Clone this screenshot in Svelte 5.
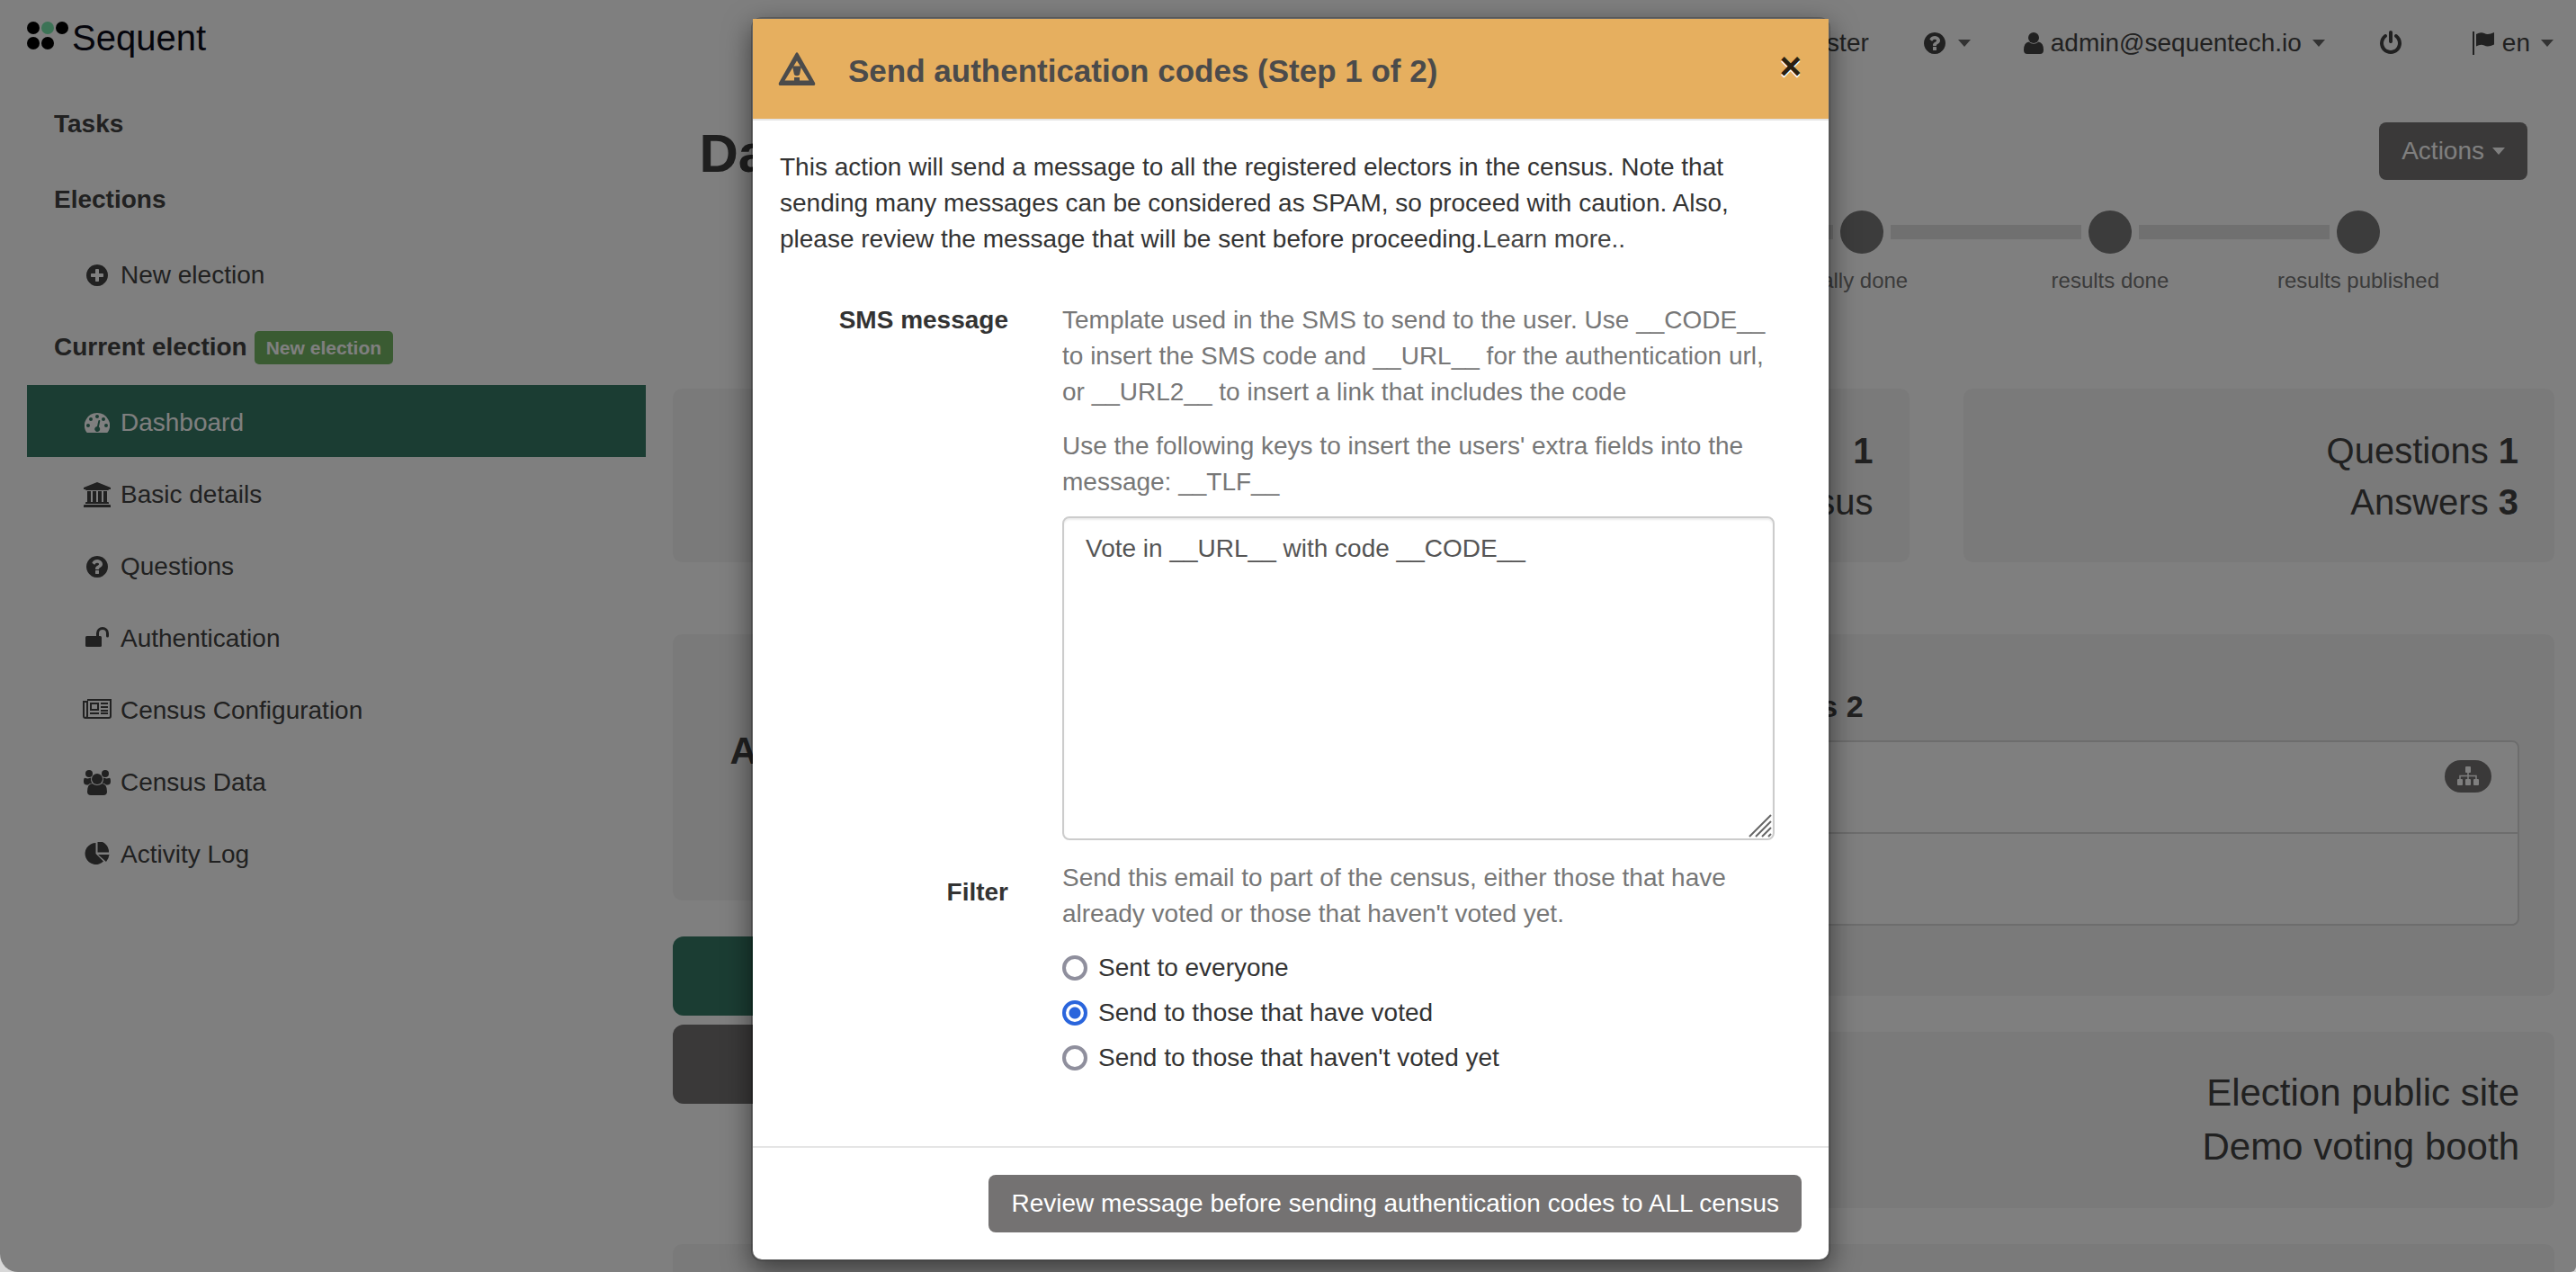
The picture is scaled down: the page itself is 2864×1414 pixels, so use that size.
<script lang="ts">
  let message = $state('Vote in __URL__ with code __CODE__');
  let filter = $state('voted');

  const menu = [
    { icon: 'gauge', label: 'Dashboard', active: true },
    { icon: 'bank', label: 'Basic details' },
    { icon: 'question', label: 'Questions' },
    { icon: 'unlock', label: 'Authentication' },
    { icon: 'news', label: 'Census Configuration' },
    { icon: 'group', label: 'Census Data' },
    { icon: 'pie', label: 'Activity Log' },
  ];

  const steps = ['created', 'started', 'notifications', 'stopped', 'tally done', 'results done', 'results published'];

  const filters = [
    { value: 'all', label: 'Sent to everyone' },
    { value: 'voted', label: 'Send to those that have voted' },
    { value: 'not-voted', label: "Send to those that haven't voted yet" },
  ];
</script>

{#snippet icon(name: string)}
  {#if name === 'gauge'}
    <svg class="icon" width="28" height="28" viewBox="0 0 28 28" aria-hidden="true">
      <path fill="currentColor" fill-rule="evenodd" d="M14 3A14 14 0 0 0 2 24.3Q2.5 25 3.2 25H24.8Q25.5 25 26 24.3A14 14 0 0 0 14 3zM4 15a2 2 0 1 0 0 4 2 2 0 0 0 0-4zM7 8a2 2 0 1 0 0 4 2 2 0 0 0 0-4zM14 5a2 2 0 1 0 0 4 2 2 0 0 0 0-4zM21 8a2 2 0 1 0 0 4 2 2 0 0 0 0-4zM24 15a2 2 0 1 0 0 4 2 2 0 0 0 0-4zM15.4 11.6L14 18A3 3 0 1 0 15.9 18.5L17.3 12.1A1 1 0 0 0 15.4 11.6z" />
    </svg>
  {:else if name === 'bank'}
    <svg class="icon" width="30" height="28" viewBox="0 0 30 28" aria-hidden="true">
      <path fill="currentColor" d="M15 0L30 6V8H28Q28 9 27 9H3Q2 9 2 8H0V6zM4 10H8V22H10V10H14V22H16V10H20V22H22V10H26V22H27Q28 22 28 23V24H2V23Q2 22 3 22H4zM1 25H29Q30 25 30 26V28H0V26Q0 25 1 25z" />
    </svg>
  {:else if name === 'unlock'}
    <svg class="icon" width="26" height="28" viewBox="0 0 26 28" aria-hidden="true">
      <rect x="0" y="11" width="18" height="12" rx="1.5" fill="currentColor" />
      <path d="M13.5 12V8a5.5 5.5 0 0 1 11 0V11" fill="none" stroke="currentColor" stroke-width="3" stroke-linecap="round" />
    </svg>
  {:else if name === 'news'}
    <svg class="icon" width="32" height="28" viewBox="0 2 32 28" aria-hidden="true">
      <path d="M5 4H31V22Q31 24 29 24H3Q1 24 1 22V6H5V22Q5 24 3 24M8 19H18M20 19H28M20 16H28M20 12H28M20 8H28" fill="none" stroke="currentColor" stroke-width="2" />
      <rect x="9" y="8" width="8" height="7" fill="none" stroke="currentColor" stroke-width="2" />
    </svg>
  {:else if name === 'group'}
    <svg class="icon" width="30" height="28" viewBox="0 0 30 28" aria-hidden="true">
      <g fill="currentColor">
        <circle cx="6" cy="4" r="4" />
        <circle cx="24" cy="4" r="4" />
        <circle cx="15" cy="10" r="6" />
        <path d="M2 9Q5 10 8.2 8.6Q7.500 12 9.500 14.500Q6.500 14.500 5 16.500H3Q0 16 0 13Q0 8 2 9zM28 9Q25 10 21.800 8.600Q22.500 12 20.500 14.500Q23.500 14.500 25 16.500H27Q30 16 30 13Q30 8 28 9z" />
        <path d="M9.500 15Q15 19 20.500 15Q26 15.500 26 24Q26 28 22 28H8Q4 28 4 24Q4 15.500 9.500 15z" />
      </g>
    </svg>
  {:else if name === 'pie'}
    <svg class="icon" width="28" height="28" viewBox="0 2 28 28" aria-hidden="true">
      <path fill="currentColor" d="M12.500 3V15L21 23.500A12 12 0 1 1 12.500 3zM15 16H27.500Q27 20.500 24 24zM14.500 1A12 12 0 0 1 27 13.500H14.500z" />
    </svg>
  {:else if name === 'plus'}
    <svg class="icon" width="28" height="28" viewBox="0 0 1792 1792" aria-hidden="true">
      <path fill="currentColor" d="M1344 960v-128q0-26-19-45t-45-19h-256v-256q0-26-19-45t-45-19h-128q-26 0-45 19t-19 45v256h-256q-26 0-45 19t-19 45v128q0 26 19 45t45 19h256v256q0 26 19 45t45 19h128q26 0 45-19t19-45v-256h256q26 0 45-19t19-45zm320-64q0 209-103 385.500t-279.500 279.500-385.500 103-385.500-103-279.500-279.500-103-385.500 103-385.500 279.500-279.500 385.500-103 385.500 103 279.500 279.500 103 385.500z" />
    </svg>
  {:else if name === 'question'}
    <svg class="icon" width="28" height="28" viewBox="0 0 1792 1792" aria-hidden="true">
      <path fill="currentColor" d="M1024 1376v-192q0-14-9-23t-23-9h-192q-14 0-23 9t-9 23v192q0 14 9 23t23 9h192q14 0 23-9t9-23zm256-672q0-88-55.500-163t-138.500-116-170-41q-243 0-371 213-15 24 8 42l132 100q7 6 19 6 16 0 25-12 53-68 86-92 34-24 86-24 48 0 85.500 26t37.500 59q0 38-20 61t-68 45q-63 28-115.500 86.500t-52.500 125.500v36q0 14 9 23t23 9h192q14 0 23-9t9-23q0-19 21.500-49.500t54.500-49.500q32-18 49-28.500t46-35 44.500-48 28-60.500 12.500-81zm384 192q0 209-103 385.500t-279.500 279.500-385.500 103-385.500-103-279.500-279.500-103-385.500 103-385.500 279.500-279.500 385.500-103 385.500 103 279.500 279.500 103 385.500z" />
    </svg>
  {:else if name === 'user'}
    <svg class="icon" width="22" height="28" viewBox="0 0 22 28" aria-hidden="true">
      <circle cx="11" cy="8" r="6" fill="currentColor" />
      <path fill="currentColor" d="M5.500 12.500Q11 17 16.500 12.500Q22 13.500 22 21.500Q22 26 18 26H4Q0 26 0 21.500Q0 13.500 5.500 12.500z" />
    </svg>
  {:else if name === 'power'}
    <svg class="icon" width="28" height="28" viewBox="0 0 1792 1792" aria-hidden="true">
      <path fill="currentColor" d="M1664 896q0 156-61 298t-164 245-245 164-298 61-298-61-245-164-164-245-61-298q0-182 80.500-343t226.500-270q43-32 95.500-25t83.500 50q32 42 24.500 94.500t-49.500 84.500q-98 74-151.500 181t-53.500 228q0 104 40.500 198.500t109.500 163.500 163.500 109.500 198.500 40.500 198.500-40.500 163.500-109.500 109.500-163.500 40.500-198.500q0-121-53.500-228t-151.500-181q-42-32-49.500-84.500t24.500-94.500q31-43 84-50t95 25q146 109 226.500 270t80.500 343zm-640-768v640q0 52-38 90t-90 38-90-38-38-90v-640q0-52 38-90t90-38 90 38 38 90z" />
    </svg>
  {:else if name === 'flag'}
    <svg class="icon" width="26" height="28" viewBox="0 0 26 28" aria-hidden="true">
      <path fill="currentColor" d="M1 1H3V27H1zM5 4Q10 1 14 3Q18 5.500 25 2V15.500Q18 19 14 16.500Q10 14.500 5 17.500z" />
    </svg>
  {/if}
{/snippet}

<div class="window">
  <header class="navbar">
    <a class="brand" href="#home">
      <svg width="46" height="32" viewBox="0 0 46 32" aria-hidden="true">
        <circle cx="7" cy="7" r="7" />
        <circle class="mint" cx="23" cy="7" r="7" />
        <circle cx="39" cy="7" r="7" />
        <circle cx="7" cy="24" r="7" />
        <circle cx="23" cy="24" r="7" />
      </svg>
      <span>Sequent</span>
    </a>
    <nav class="top-links">
      <a href="#register">Register</a>
      <a href="#help" aria-label="Help">{@render icon('question')}<i class="caret"></i></a>
      <a href="#account">{@render icon('user')}<span>admin@sequentech.io</span><i class="caret"></i></a>
      <a class="logout" href="#logout" aria-label="Log out">{@render icon('power')}</a>
      <a href="#language">{@render icon('flag')}<span>en</span><i class="caret"></i></a>
    </nav>
  </header>

  <div class="columns">
    <nav class="sidebar">
      <a class="section" href="#tasks">Tasks</a>
      <a class="section" href="#elections">Elections</a>
      <a class="item" href="#new"><span class="slot">{@render icon('plus')}</span>New election</a>
      <div class="section">Current election <span class="tag">New election</span></div>
      {#each menu as entry}
        <a class="item" class:active={entry.active} href="#{entry.icon}">
          <span class="slot">{@render icon(entry.icon)}</span>{entry.label}
        </a>
      {/each}
    </nav>

    <main>
      <div class="title-row">
        <h1>Dashboard</h1>
        <button class="btn" type="button">Actions<i class="caret"></i></button>
      </div>

      <ol class="steps">
        {#each steps as step}
          <li><span class="dot"></span><span class="step-label">{step}</span></li>
        {/each}
      </ol>

      <div class="thirds">
        <section class="card figures"></section>
        <section class="card figures">
          <p><b>1</b></p>
          <p>Census</p>
        </section>
        <section class="card figures">
          <p>Questions <b>1</b></p>
          <p>Answers <b>3</b></p>
        </section>
      </div>

      <div class="halves">
        <div class="stack">
          <section class="card auth"><h2>Authentication</h2></section>
          <div class="buttons">
            <button class="big go" type="button" aria-label="Continue"></button>
            <button class="big" type="button" aria-label="More actions"></button>
          </div>
        </div>
        <div class="stack">
          <section class="card authorities">
            <h3>Authorities 2</h3>
            <ul>
              <li>
                <span class="pill">
                  <svg width="26" height="22" viewBox="0 0 26 22" aria-hidden="true">
                    <path d="M13 5V15M4 15V10.500H22V15" fill="none" stroke="currentColor" stroke-width="1.500" />
                    <g fill="currentColor">
                      <rect x="10" y="0" width="6" height="7" rx="1" />
                      <rect x="1" y="14" width="6" height="7" rx="1" />
                      <rect x="10" y="14" width="6" height="7" rx="1" />
                      <rect x="19" y="14" width="6" height="7" rx="1" />
                    </g>
                  </svg>
                </span>
              </li>
              <li></li>
            </ul>
          </section>
          <section class="card links">
            <a href="#site">Election public site</a>
            <a href="#booth">Demo voting booth</a>
          </section>
        </div>
        <section class="card wide"></section>
      </div>
    </main>
  </div>

  <div class="backdrop">
    <div class="modal" role="dialog" aria-labelledby="modal-title">
      <div class="modal-header">
        <svg width="42" height="38" viewBox="0 0 42 38" aria-hidden="true">
          <path fill="currentColor" fill-rule="evenodd" d="M19.500 1.500Q21 -1 22.500 1.500L41 34Q42 37 39.500 37H2.500Q0 37 1 34zM21 9.500L7.500 31.500H34.500z" />
          <path fill="currentColor" d="M16 15.500H26L24 25Q21 27.500 18 25zM18 28H24V33H18z" />
        </svg>
        <h4 id="modal-title">Send authentication codes (Step 1 of 2)</h4>
        <button class="close" type="button" aria-label="Close">×</button>
      </div>

      <form class="modal-body">
        <p class="intro">
          This action will send a message to all the registered electors in the census. Note that
          sending many messages can be considered as SPAM, so proceed with caution. Also, please
          review the message that will be sent before proceeding.<a href="#learn">Learn more..</a>
        </p>
        <div class="field">
          <label class="name" for="sms">SMS message</label>
          <div>
            <p class="hint">
              Template used in the SMS to send to the user. Use __CODE__ to insert the SMS code and
              __URL__ for the authentication url, or __URL2__ to insert a link that includes the code
            </p>
            <p class="hint keys">
              Use the following keys to insert the users' extra fields into the message: __TLF__
            </p>
            <div class="area">
              <textarea id="sms" bind:value={message}></textarea>
              <svg class="grip" width="26" height="26" viewBox="0 0 26 26" aria-hidden="true">
                <path d="M1 25L25 1M8 25L25 8M15 25L25 15M22 25L25 22" fill="none" stroke="#666" stroke-width="2" />
              </svg>
            </div>
          </div>
        </div>
        <div class="field" role="radiogroup" aria-labelledby="filter-name">
          <span class="name filter-name" id="filter-name">Filter</span>
          <div>
            <p class="hint">
              Send this email to part of the census, either those that have already voted or those
              that haven't voted yet.
            </p>
            {#each filters as option}
              <label class="radio">
                <input type="radio" name="filter" value={option.value} bind:group={filter} />
                {option.label}
              </label>
            {/each}
          </div>
        </div>
      </form>

      <div class="modal-footer">
        <button class="btn" type="button">Review message before sending authentication codes to ALL census</button>
      </div>
    </div>
  </div>
</div>

<style>
  :global(body) {
    background: #d8d8d8;
  }

  .window {
    position: relative;
    height: 100vh;
    overflow: hidden;
    box-sizing: border-box;
    background: #fff;
    border-radius: 0 0 6px 20px;
    color: #424242;
    font: 28px/40px 'Liberation Sans', Arial, sans-serif;
  }

  .window :global(*) {
    box-sizing: border-box;
  }

  a {
    color: inherit;
    text-decoration: none;
  }

  h1, h2, h3, h4, p, ul, ol {
    margin: 0;
    padding: 0;
    list-style: none;
  }

  button {
    border: 0;
    font: inherit;
  }

  .icon {
    display: block;
    flex: none;
  }

  .caret {
    border: 7px solid transparent;
    border-top: 8px solid currentColor;
    border-bottom: 0;
  }

  /* Top bar */
  .navbar {
    display: flex;
    justify-content: space-between;
    align-items: flex-start;
    height: 96px;
    padding: 0 25px 0 30px;
  }

  .brand {
    display: flex;
    gap: 4px;
    padding-top: 24px;
    color: #0a0a18;
    font-size: 40px;
    line-height: 36px;
  }

  .mint {
    fill: #78e6ac;
  }

  .top-links {
    display: flex;
    gap: 59px;
    padding-top: 28px;
  }

  .top-links a {
    display: flex;
    align-items: center;
    gap: 8px;
  }

  .logout {
    margin-right: 17px;
  }

  .top-links .caret {
    margin-left: 4px;
    color: #666;
  }

  .columns {
    display: flex;
    gap: 30px;
    padding: 0 24px 0 30px;
  }

  /* Side menu */
  .sidebar {
    flex: none;
    width: calc(25% - 15px);
  }

  .section {
    display: flex;
    align-items: center;
    gap: 8px;
    height: 84px;
    padding: 0 30px;
    font-weight: bold;
  }

  .tag {
    padding: 0 13px;
    border-radius: 5px;
    background: #74b664;
    color: #fff;
    font-size: 21px;
    line-height: 37px;
  }

  .item {
    display: flex;
    align-items: center;
    gap: 8px;
    height: 80px;
    padding: 4px 60px 0;
  }

  .slot {
    display: flex;
    justify-content: center;
    width: 36px;
  }

  .active {
    background: #367a66;
    color: #fff;
  }

  /* Dashboard */
  main {
    flex: 1;
    min-width: 0;
    padding-top: 40px;
  }

  .title-row {
    display: flex;
    justify-content: space-between;
    padding: 0 30px;
  }

  h1 {
    height: 64px;
    color: #3e3e3e;
    font-size: 60px;
    line-height: 70px;
  }

  .btn {
    display: flex;
    align-items: center;
    gap: 9px;
    height: 64px;
    padding: 0 25px;
    border-radius: 8px;
    background: #747272;
    color: #fff;
  }

  .steps {
    display: flex;
    padding: 34px 80px 0;
  }

  .steps li {
    position: relative;
    display: flex;
    flex: 1;
    flex-direction: column;
    align-items: center;
    gap: 13px;
  }

  .steps li + li::before {
    content: '';
    position: absolute;
    top: 16px;
    right: calc(50% + 32px);
    width: calc(100% - 64px);
    height: 16px;
    background: #e0e0e0;
  }

  .dot {
    width: 48px;
    height: 48px;
    border-radius: 50%;
    background: #787878;
  }

  .step-label {
    color: #777;
    font-size: 24px;
    line-height: 34px;
  }

  .card {
    border-radius: 10px;
    background: #f5f5f5;
  }

  .thirds {
    display: grid;
    grid-template-columns: repeat(3, minmax(0, 1fr));
    gap: 60px;
    margin-top: 103px;
  }

  .figures {
    min-height: 193px;
    padding: 41px 40px 38px;
    font-size: 40px;
    line-height: 57px;
    text-align: right;
  }

  .halves {
    display: grid;
    grid-template-columns: repeat(2, minmax(0, 1fr));
    gap: 40px 60px;
    margin-top: 80px;
  }

  .stack {
    display: flex;
    flex-direction: column;
    gap: 40px;
  }

  .auth {
    padding: 100px 64px 136px;
  }

  h2 {
    font-size: 42px;
    line-height: 60px;
  }

  .buttons {
    display: flex;
    flex-direction: column;
    gap: 10px;
  }

  .big {
    height: 88px;
    border-radius: 12px;
    background: #747272;
  }

  .go {
    background: #367a66;
  }

  .authorities {
    padding: 60px 39px 78px 40px;
  }

  h3 {
    font-size: 34px;
    line-height: 40px;
  }

  ul {
    margin-top: 18px;
    border: 2px solid #dadada;
    border-radius: 8px;
    background: #fff;
  }

  ul li {
    display: flex;
    justify-content: flex-end;
    height: 100px;
    padding: 20px 29px;
  }

  ul li + li {
    height: 102px;
    border-top: 2px solid #dadada;
  }

  .pill {
    display: flex;
    align-items: center;
    justify-content: center;
    width: 52px;
    height: 36px;
    border-radius: 20px;
    background: #747272;
    color: #fff;
  }

  .links {
    display: flex;
    flex-direction: column;
    padding: 38px 39px 38px 40px;
    font-size: 42px;
    line-height: 60px;
    text-align: right;
  }

  .wide {
    grid-column: 1 / -1;
    height: 200px;
  }

  /* Dialog */
  .backdrop {
    position: absolute;
    inset: 0;
    padding: 19px 0 0 6px;
    background: rgba(0, 0, 0, 0.5);
  }

  .modal {
    width: 1200px;
    max-width: 100%;
    margin: 0 auto;
    border: 2px solid rgba(0, 0, 0, 0.2);
    border-radius: 12px;
    background: #fff;
    background-clip: padding-box;
    box-shadow: 0 10px 30px rgba(0, 0, 0, 0.5);
    color: #333;
  }

  .modal-header {
    display: flex;
    align-items: center;
    gap: 36px;
    height: 113px;
    padding: 0 30px 0 28px;
    border-bottom: 2px solid #e5e5e5;
    background: #e6af5f;
    color: #4b4b4b;
  }

  h4 {
    flex: 1;
    padding-top: 4px;
    font-size: 35px;
    line-height: 40px;
  }

  .close {
    align-self: flex-start;
    margin-top: 32px;
    padding: 0;
    background: none;
    color: #2a2011;
    font-size: 42px;
    font-weight: bold;
    line-height: 42px;
    text-shadow: 0 2px 0 #fff;
  }

  .modal-body {
    padding: 32px 30px 68px;
  }

  .intro {
    margin-bottom: 50px;
  }

  .intro a {
    color: #444;
  }

  .field {
    display: grid;
    grid-template-columns: 254px 1fr;
    gap: 60px;
    padding-right: 30px;
  }

  .field + .field {
    margin-top: 22px;
  }

  .name {
    font-weight: bold;
    text-align: right;
  }

  .filter-name {
    padding-top: 16px;
  }

  .hint {
    margin-bottom: 20px;
    color: #777;
  }

  .keys {
    margin-bottom: 18px;
  }

  .area {
    position: relative;
    display: flex;
  }

  textarea {
    width: 100%;
    height: 360px;
    padding: 14px 24px;
    border: 2px solid #ccc;
    border-radius: 8px;
    box-shadow: inset 0 2px 2px rgba(0, 0, 0, 0.075);
    background: #fff;
    color: #555;
    font: inherit;
    resize: none;
  }

  .grip {
    position: absolute;
    right: 3px;
    bottom: 3px;
  }

  .radio {
    display: flex;
    align-items: center;
    gap: 12px;
    margin-bottom: 10px;
  }

  .radio input {
    width: 28px;
    height: 28px;
    margin: 0;
    border: 4px solid #8f8f9d;
    border-radius: 50%;
    appearance: none;
  }

  .radio input:checked {
    border-color: #2a65dc;
    background: radial-gradient(circle, #2a65dc 6px, #fff 7px);
  }

  .modal-footer {
    display: flex;
    justify-content: flex-end;
    padding: 30px;
    border-top: 2px solid #e5e5e5;
  }
</style>
